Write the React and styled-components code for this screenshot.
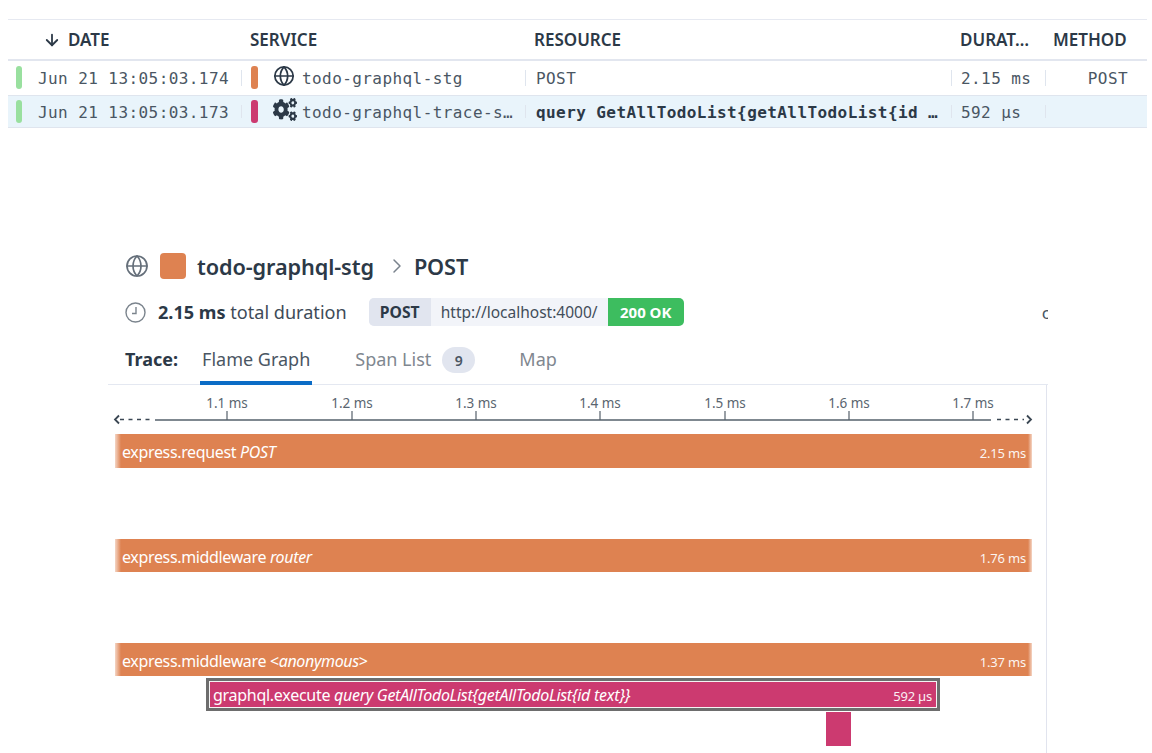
import React from "react";
import styled, { createGlobalStyle } from "styled-components";
import { FaCogs } from "react-icons/fa";
import { ArrowDown, Globe, ChevronRight } from "lucide-react";

const Global = createGlobalStyle`
  html, body { margin: 0; padding: 0; background: #fff; }
  body { width: 1152px; height: 753px; overflow: hidden; font-family: "Noto Sans", sans-serif; color: #2c3947; }
`;
const Page = styled.div`
  width: 1152px; height: 753px; overflow: hidden; padding-top: 19px; box-sizing: border-box;
`;
const Table = styled.div`
  margin: 0 5px 0 8px; border-top: 1px solid #e6e9f1;
`;
const cols = "233px 284px 426px 94px 102px";
const HeadRow = styled.div`
  display: grid; grid-template-columns: ${cols}; height: 41px; align-items: center;
  border-bottom: 2px solid #e2e6ef; box-sizing: border-box;
`;
const HeadCell = styled.div`
  font-size: 17px; font-weight: 600; color: #2c3947; padding-left: ${p => p.$pad}px;
  display: flex; align-items: center; white-space: nowrap;
`;
const DateArrow = styled(ArrowDown)`
  width: 18px; height: 18px; margin-right: 7px; stroke-width: 2.4;
`;
const Row = styled.div`
  display: grid; grid-template-columns: ${cols}; height: ${p => p.$h}px; align-items: center; box-sizing: border-box;
  background: ${p => (p.$active ? "#e9f4fb" : "#fff")};
  border-bottom: 1px solid #dfe5ee;
`;
const Cell = styled.div`
  display: flex; align-items: center; height: 100%; min-width: 0; position: relative;
  font-family: "DejaVu Sans Mono", monospace; font-size: 16px; letter-spacing: 0.42px; color: #4a5663;
  padding-left: ${p => p.$pad || 0}px; padding-top: 1px; box-sizing: border-box; white-space: nowrap;
  justify-content: ${p => (p.$end ? "flex-end" : "flex-start")};
  padding-right: ${p => p.$padR || 0}px;
`;
const Divider = styled.span`
  position: absolute; left: 0; top: 9px; bottom: 9px; width: 1px; background: #dfe5ee;
`;
const Pill = styled.span`
  display: block; width: ${p => p.$w}px; height: 23px; border-radius: 3px; background: ${p => p.$c};
  margin-right: ${p => p.$mr}px; flex: none; transform: translateY(-1px);
`;
const ServiceIcon = styled.span`
  display: flex; width: 22px; margin-right: 7px; color: #2c3947; flex: none; transform: translateY(-3px);
`;
const Cogs = styled(FaCogs)`
  width: 24px; height: 23px; flex: none;
`;
const Strong = styled.span`
  font-weight: 700; color: #2c3947;
`;
const Section = styled.div`
  margin: 123px 0 0 108px; overflow: hidden; width: 940px;
`;
const TitleRow = styled.div`
  display: flex; align-items: center; padding-left: 17px; height: 30px;
`;
const GlobeIcon = styled(Globe)`
  width: 24px; height: 24px; color: #656f7a; stroke-width: 1.7; margin-right: 11px;
`;
const Swatch = styled.span`
  width: 26px; height: 26px; border-radius: 4px; background: #de8251; margin-right: 11px;
`;
const Title = styled.span`
  font-size: 21.7px; font-weight: 600; color: #2c3947; letter-spacing: -0.1px;
`;
const Chevron = styled(ChevronRight)`
  width: 24px; height: 24px; color: #7a838d; margin: 0 5px 0 11px; stroke-width: 1.5;
`;
const MetaRow = styled.div`
  display: flex; align-items: center; padding-left: 17px; height: 30px; margin-top: 16px; white-space: nowrap;
`;
const ClockSvg = styled.svg`
  width: 21px; height: 21px; margin-right: 12px; flex: none;
`;
const Duration = styled.span`
  font-size: 18.1px; color: #404b58; margin-right: 22px; flex: none;
  & b { font-weight: 700; color: #2c3947; }
`;
const UrlGroup = styled.div`
  display: flex; flex: none; height: 28px; align-items: center; border-radius: 5px; overflow: hidden; background: #f2f4f9;
`;
const Method = styled.span`
  background: #e1e5ef; height: 100%; width: 62px; display: flex; align-items: center; justify-content: center;
  font-weight: 700; color: #2c3947; font-size: 15.7px;
`;
const Url = styled.span`
  padding: 0 10px; color: #424d59; width: 157px; font-size: 15.5px;
`;
const Status = styled.span`
  background: #3dbd5f; color: #fff; height: 100%; width: 76px; display: flex; align-items: center; justify-content: center;
  font-weight: 700; font-size: 15px;
`;
const Clipped = styled.span`
  flex: none; margin-left: 358px; font-size: 17px; color: #4a5663;
`;
const Tabs = styled.div`
  display: flex; align-items: stretch; height: 44px; margin-top: 14px; padding-left: 17px;
  border-bottom: 1px solid #e4e8f1; box-sizing: border-box;
`;
const TabLabel = styled.span`
  font-size: 18px; font-weight: 700; color: #2c3947; display: flex; align-items: center; margin-right: 22px; padding-bottom: 8px;
`;
const Tab = styled.span`
  font-size: 18px; color: ${p => (p.$active ? "#4a5663" : "#7f8790")}; display: flex; align-items: center;
  margin-right: ${p => p.$mr}px; padding: 0 2px 4px; margin-bottom: -1px; gap: 11px;
  border-bottom: 4px solid ${p => (p.$active ? "#0b6cc6" : "transparent")};
`;
const Badge = styled.span`
  width: 33px; height: 26px; border-radius: 13px; background: #e1e5ef; color: #4a5663; font-size: 14px; font-weight: 600;
  display: flex; align-items: center; justify-content: center; transform: translateY(1px);
`;
const Chart = styled.div`
  border-right: 1px solid #e1e4ee; height: 400px; margin-right: 1px;
`;
const AxisSvg = styled.svg`
  display: block; width: 938px; height: 49px;
`;
const Bar = styled.div`
  display: flex; align-items: center; justify-content: space-between; box-sizing: border-box;
  height: ${p => p.$h}px; margin-top: ${p => p.$top}px; margin-left: ${p => p.$left}px; width: ${p => p.$w}px;
  background: ${p => p.$c}; color: #fff; padding: 2px 6px 0 7px; font-size: 16px; letter-spacing: -0.35px; white-space: nowrap; overflow: hidden;
  ${p => p.$fade && `
    background: linear-gradient(90deg, #de825155 0, #de8251 6px, #de8251 calc(100% - 4px), #de825155 100%);
  `}
  ${p => p.$selected && `
    border: 1px solid #f4f4f4;
    padding: 0 4px 0 3px;
    letter-spacing: -0.28px;
    box-shadow: 0 0 0 3px #6d6d6d;
  `}
  & em { font-style: italic; }
`;
const BarTime = styled.span`
  font-size: 13px; letter-spacing: -0.2px; opacity: 0.92; padding-top: 2px;
`;

const ticks = [["1.1 ms",119],["1.2 ms",244],["1.3 ms",368],["1.4 ms",492],["1.5 ms",617],["1.6 ms",741],["1.7 ms",865]];

function Axis() {
  return (
    <AxisSvg viewBox="0 0 938 49">
      <path d="M11 30.5 L7 34.5 L11 38.5" fill="none" stroke="#3b4753" strokeWidth="1.8" />
      <line x1="12" x2="45" y1="34.5" y2="34.5" stroke="#3b4753" strokeWidth="1.4" strokeDasharray="4 4.5" />
      <line x1="47" x2="883" y1="35" y2="35" stroke="#55606b" strokeWidth="1.6" />
      <line x1="889" x2="916" y1="34.5" y2="34.5" stroke="#3b4753" strokeWidth="1.4" strokeDasharray="4 4.5" />
      <path d="M919 30.5 L923 34.5 L919 38.5" fill="none" stroke="#3b4753" strokeWidth="1.8" />
      {ticks.map(([t, x]) => (
        <g key={t}>
          <line x1={x} x2={x} y1="26" y2="35" stroke="#55606b" strokeWidth="1.2" />
          <text x={x} y="23" textAnchor="middle" fontFamily="Noto Sans, sans-serif" fontSize="13.5" fill="#5a6570">{t}</text>
        </g>
      ))}
    </AxisSvg>
  );
}

const GLOBE = <Globe size={22} strokeWidth={1.9} />;

export default function App() {
  return (
    <Page>
      <Global />
      <Table>
        <HeadRow>
          <HeadCell $pad={35}><DateArrow />DATE</HeadCell>
          <HeadCell $pad={9}>SERVICE</HeadCell>
          <HeadCell $pad={9}>RESOURCE</HeadCell>
          <HeadCell $pad={9}>DURAT…</HeadCell>
          <HeadCell $pad={8}>METHOD</HeadCell>
        </HeadRow>
        <Row $h={35}>
          <Cell $pad={8}><Pill $w={6} $c="#99e09f" $mr={16} />Jun 21 13:05:03.174</Cell>
          <Cell $pad={10}><Divider /><Pill $w={7} $c="#de8251" $mr={15} /><ServiceIcon>{GLOBE}</ServiceIcon>todo-graphql-stg</Cell>
          <Cell $pad={11}><Divider />POST</Cell>
          <Cell $pad={10}><Divider />2.15 ms</Cell>
          <Cell $end $padR={19}><Divider />POST</Cell>
        </Row>
        <Row $h={32} $active>
          <Cell $pad={8}><Pill $w={6} $c="#99e09f" $mr={16} />Jun 21 13:05:03.173</Cell>
          <Cell $pad={10}><Divider /><Pill $w={7} $c="#cc3a70" $mr={15} /><ServiceIcon><Cogs preserveAspectRatio="none" /></ServiceIcon>todo-graphql-trace-s…</Cell>
          <Cell $pad={11}><Divider /><Strong>query GetAllTodoList{"{"}getAllTodoList{"{"}id …</Strong></Cell>
          <Cell $pad={10}><Divider />592 µs</Cell>
          <Cell><Divider /></Cell>
        </Row>
      </Table>
      <Section>
        <TitleRow>
          <GlobeIcon /><Swatch /><Title>todo-graphql-stg</Title><Chevron /><Title>POST</Title>
        </TitleRow>
        <MetaRow>
          <ClockSvg viewBox="0 0 21 21">
            <circle cx="10.5" cy="10.5" r="9.5" fill="none" stroke="#7b848d" strokeWidth="1.4" />
            <path d="M11 5v6.5H7" fill="none" stroke="#7b848d" strokeWidth="1.4" />
          </ClockSvg>
          <Duration><b>2.15 ms</b> total duration</Duration>
          <UrlGroup><Method>POST</Method><Url>http://localhost:4000/</Url><Status>200 OK</Status></UrlGroup>
          <Clipped>c</Clipped>
        </MetaRow>
        <Tabs>
          <TabLabel>Trace:</TabLabel>
          <Tab $active $mr={41}>Flame Graph</Tab>
          <Tab $mr={40}>Span List <Badge>9</Badge></Tab>
          <Tab $mr={0}>Map</Tab>
        </Tabs>
        <Chart>
          <Axis />
          <Bar $fade $c="#de8251" $h={34} $top={0} $left={7} $w={917}><span>express.request <em>POST</em></span><BarTime>2.15 ms</BarTime></Bar>
          <Bar $fade $c="#de8251" $h={33} $top={71} $left={7} $w={917}><span>express.middleware <em>router</em></span><BarTime>1.76 ms</BarTime></Bar>
          <Bar $fade $c="#de8251" $h={33} $top={71} $left={7} $w={917}><span>express.middleware &lt;<em>anonymous</em>&gt;</span><BarTime>1.37 ms</BarTime></Bar>
          <Bar $selected $c="#cc3a70" $h={27} $top={5} $left={101} $w={728}><span>graphql.execute <em>query GetAllTodoList{"{"}getAllTodoList{"{"}id text{"}}"}</em></span><BarTime>592 µs</BarTime></Bar>
          <Bar $c="#cc3a70" $h={34} $top={4} $left={718} $w={25} />
        </Chart>
      </Section>
    </Page>
  );
}
